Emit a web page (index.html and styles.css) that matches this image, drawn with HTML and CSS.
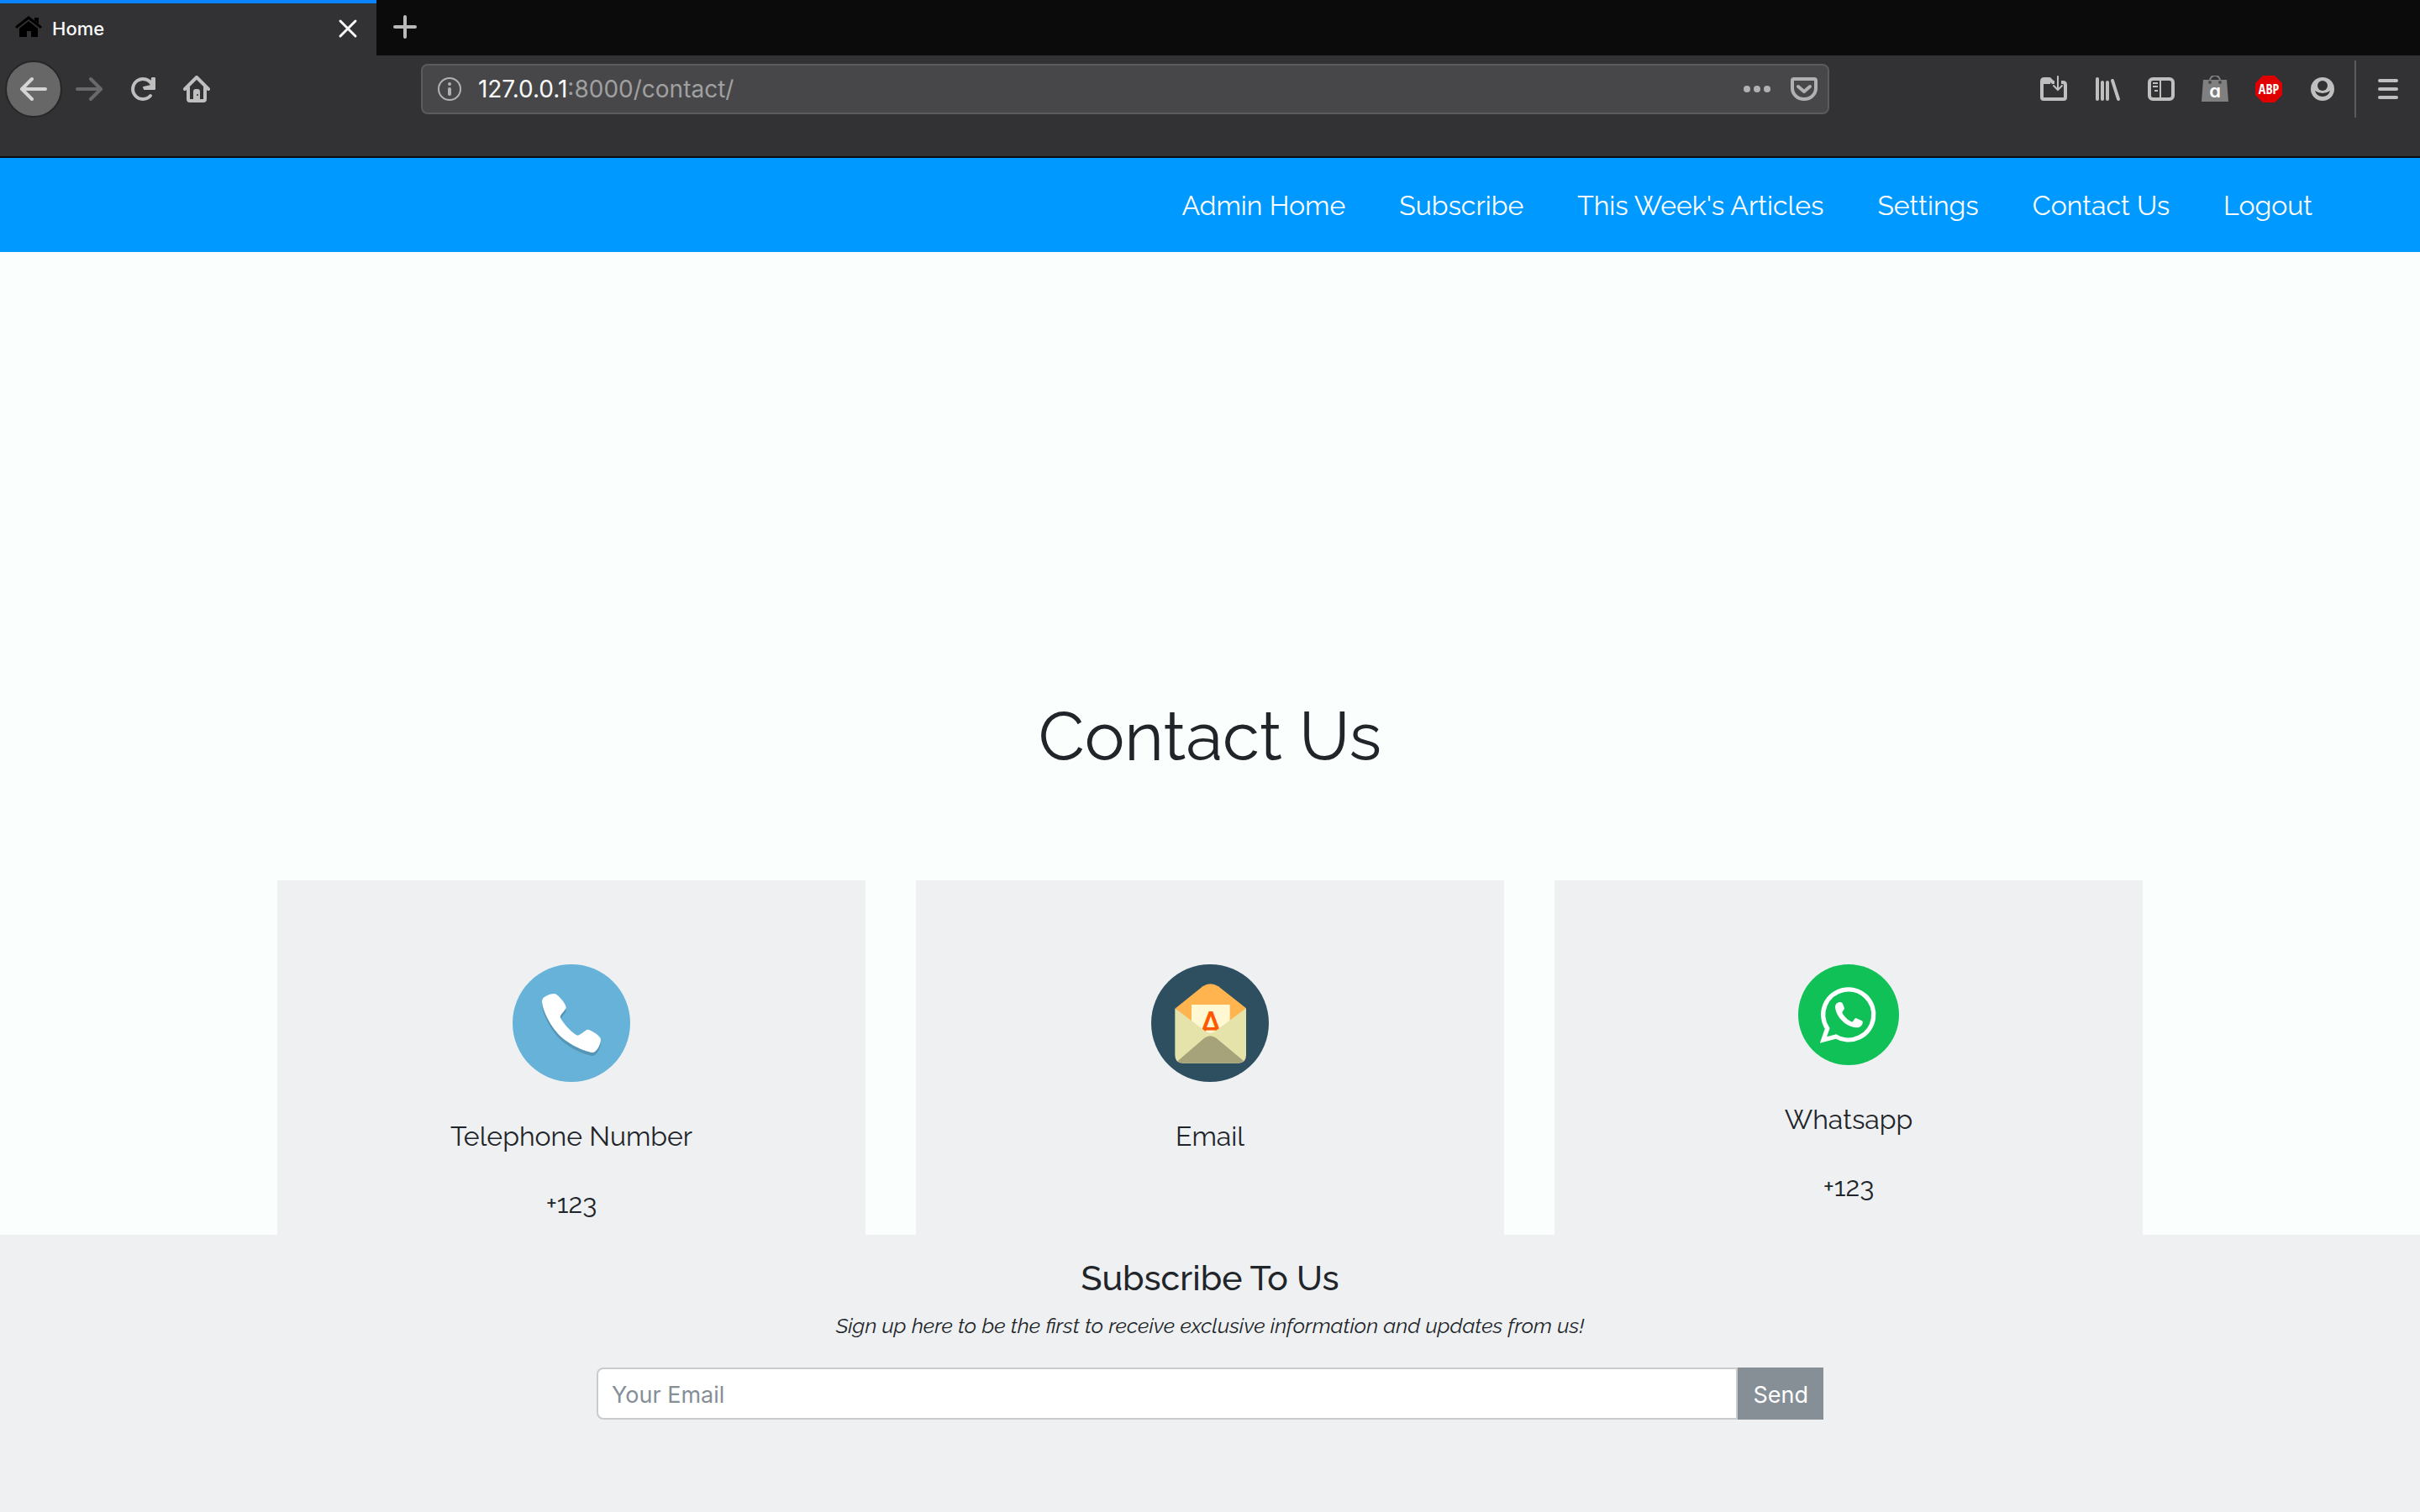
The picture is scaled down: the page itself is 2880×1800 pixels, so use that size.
FILE: index.html
```html
<!DOCTYPE html>
<html lang="en">
<head>
<meta charset="utf-8">
<meta name="viewport" content="width=device-width, initial-scale=1">
<title>Home</title>
<link rel="stylesheet" href="styles.css">
</head>
<body>
<div class="app">
  <header class="browser">
    <div class="tabs">
      <div class="tab">
        <svg class="icon" viewBox="0 0 32 32" aria-hidden="true"><path d="M5 15 16 6l11 9v11h-8v-7h-5v7H5z"/><path d="M23 3h5v9l-5-4z"/><path d="M2 15 16 4l14 11" fill="none" stroke="#323234" stroke-width="5"/><path d="M2 14 16 3l14 11" fill="none" stroke="#000" stroke-width="3" stroke-linecap="round"/></svg>
        <span class="tab-title">Home</span>
        <button class="tab-close" type="button" aria-label="Close tab"><svg class="icon" viewBox="0 0 32 32"><path d="m7 7 18 18M25 7 7 25" fill="none" stroke="#f9f9fa" stroke-width="3" stroke-linecap="round"/></svg></button>
      </div>
      <button class="tab-new" type="button" aria-label="New tab"><svg class="icon" viewBox="0 0 32 32"><path d="M16 4v24M4 16h24" fill="none" stroke="#b9b9ba" stroke-width="4" stroke-linecap="round"/></svg></button>
    </div>
    <div class="toolbar">
      <button class="tool tool-back" type="button" aria-label="Back"><svg class="icon" viewBox="0 0 32 32"><path d="M30 16H3M14 4 2 16l12 12" fill="none" stroke="#d4d4d4" stroke-width="4" stroke-linecap="round" stroke-linejoin="round"/></svg></button>
      <button class="tool" type="button" aria-label="Forward"><svg class="icon" viewBox="0 0 32 32"><path d="M2 16h27M18 4l12 12-12 12" fill="none" stroke="#69696b" stroke-width="4" stroke-linecap="round" stroke-linejoin="round"/></svg></button>
      <button class="tool" type="button" aria-label="Reload"><svg class="icon" viewBox="0 0 32 32"><path d="M25 24a12 12 0 1 1 2-13" fill="none" stroke="#bfbfc0" stroke-width="4" stroke-linecap="round"/><path d="M30 3v13H18l-1-2 9-2 1-9z" fill="#bfbfc0" stroke="#bfbfc0" stroke-width="2" stroke-linejoin="round"/></svg></button>
      <button class="tool" type="button" aria-label="Home page"><svg class="icon" viewBox="0 0 32 32"><path d="M2 16 16 2l14 14M6 14v14q0 2 2 2h16q2 0 2-2V14" fill="none" stroke="#bfbfc0" stroke-width="4" stroke-linecap="round" stroke-linejoin="round"/><path d="M12 30V19q0-3 3-3h2q3 0 3 3v11z" fill="#bfbfc0"/><circle cx="17" cy="23" r="1" fill="#323234"/></svg></button>
      <span class="spring"></span>
      <div class="urlbar">
        <svg class="icon" viewBox="0 0 32 32" aria-hidden="true"><circle cx="16" cy="16" r="13" fill="none" stroke="#b1b1b3" stroke-width="2"/><circle cx="16" cy="10" r="2" fill="#b1b1b3"/><path d="M16 16v6" stroke="#b1b1b3" stroke-width="4" stroke-linecap="round"/></svg>
        <div class="url"><span class="host">127.0.0.1</span>:8000/contact/</div>
        <div class="url-actions">
          <svg class="icon" viewBox="0 0 32 32" aria-hidden="true"><g fill="#b1b1b3"><circle cx="4" cy="16" r="4"/><circle cx="16" cy="16" r="4"/><circle cx="28" cy="16" r="4"/></g></svg>
          <svg class="icon" viewBox="0 0 32 32" aria-hidden="true"><g fill="none" stroke="#b1b1b3" stroke-linecap="round" stroke-linejoin="round"><path d="M4 4h24q2 0 2 2v9a14 13 0 0 1-28 0V6q0-2 2-2z" stroke-width="4"/><path d="m9 13 7 6 7-6" stroke-width="4"/></g></svg>
        </div>
      </div>
      <span class="spring"></span>
      <button class="tool" type="button" aria-label="Save to folder"><svg class="icon" viewBox="0 0 32 32"><path d="M2 8h10M17 8h-2l-4-4H5Q2 4 2 7v19q0 2 2 2h24q2 0 2-2V11q0-3-3-3h-2" fill="none" stroke="#bfbfc0" stroke-width="4" stroke-linejoin="round"/><path d="M21 0v14" fill="none" stroke="#323234" stroke-width="6"/><path d="M21 1v16m-5-5 5 5 5-5" fill="none" stroke="#bfbfc0" stroke-width="2" stroke-linecap="round"/></svg></button>
      <button class="tool" type="button" aria-label="Library"><svg class="icon" viewBox="0 0 32 32"><path d="M4 4v24M10 8v20M16 8v20M22 6l7 22" fill="none" stroke="#bfbfc0" stroke-width="4" stroke-linecap="round"/></svg></button>
      <button class="tool" type="button" aria-label="Sidebar"><svg class="icon" viewBox="0 0 32 32"><rect x="2" y="4" width="28" height="24" rx="4" fill="none" stroke="#bfbfc0" stroke-width="4"/><path d="M15 4v24M6 9h6M6 13h6M8 18h4" stroke="#bfbfc0" stroke-width="2"/></svg></button>
      <button class="tool" type="button" aria-label="Shopping assistant"><svg class="icon" viewBox="0 0 32 32"><path d="M2 5h28l2 26H0z" fill="#808080"/><path d="M10 8V6a6 6 0 0 1 12 0v2" fill="none" stroke="#808080" stroke-width="2"/><circle cx="10" cy="8" r="2" fill="#4a4a4b"/><circle cx="22" cy="8" r="2" fill="#4a4a4b"/><text class="bag-letter" x="16" y="26">a</text></svg></button>
      <button class="tool" type="button" aria-label="Adblock Plus"><svg class="icon" viewBox="0 0 32 32"><path d="M9 0h14l9 9v14l-9 9H9l-9-9V9z" fill="#e00000"/><text class="abp-letters" x="16" y="22">ABP</text></svg></button>
      <button class="tool" type="button" aria-label="Account"><svg class="icon" viewBox="0 0 32 32"><circle cx="16" cy="16" r="14" fill="#bfbfc0"/><circle cx="16" cy="12" r="6" fill="#323234"/><path d="M7 18q4 3 9 3t9-3q-2 7-9 7t-9-7z" fill="#323234"/></svg></button>
      <span class="divider"></span>
      <button class="tool" type="button" aria-label="Menu"><svg class="icon" viewBox="0 0 32 32"><path d="M6 6h20M6 16h20M6 26h20" fill="none" stroke="#bfbfc0" stroke-width="4" stroke-linecap="round"/></svg></button>
    </div>
  </header>

  <nav class="nav">
    <a href="#admin">Admin Home</a>
    <a href="#subscribe">Subscribe</a>
    <a href="#articles">This Week's Articles</a>
    <a href="#settings">Settings</a>
    <a href="#contact">Contact Us</a>
    <a href="#logout">Logout</a>
  </nav>

  <main class="main" id="contact">
    <h1>Contact Us</h1>
    <div class="cards">
      <section class="card">
        <svg class="badge" viewBox="0 0 420 420" aria-hidden="true">
          <defs><path id="handset" d="M105 131Q104 125 112 118Q130 105 150 105C160 105 191 140 191 154C191 162 170 180 170 188C176 205 214 248 233 254C242 252 258 236 267 233C280 233 315 256 315 268C315 285 302 312 288 315C278 317 222 299 180 265C135 225 107 165 105 131Z"/></defs>
          <circle cx="210" cy="210" r="210" fill="#66b2d8"/>
          <use href="#handset" y="12" fill="#5596b6"/>
          <use href="#handset" fill="#fff"/>
        </svg>
        <h2>Telephone Number</h2>
        <p>+123</p>
      </section>
      <section class="card">
        <svg class="badge" viewBox="0 0 420 420" aria-hidden="true">
          <circle cx="210" cy="210" r="210" fill="#2d4f60"/>
          <path d="M87 157 184 79Q211 60 240 79L339 157 270 230H150Z" fill="#ffb450"/>
          <path d="M144 144h137v110H144z" fill="#fff8d2"/>
          <text class="mail-letter" x="213" y="261">A</text>
          <path d="M85 157 192 238Q211 252 230 238L339 157V325Q339 353 311 353H113Q85 353 85 325Z" fill="#e5e3a9"/>
          <path d="M95 345 190 263Q211 248 232 263L330 345Q322 353 311 353H113Q103 353 95 345Z" fill="#a6a37a"/>
        </svg>
        <h2>Email</h2>
      </section>
      <section class="card">
        <svg class="badge badge-small" viewBox="0 0 360 360" aria-hidden="true">
          <circle cx="180" cy="180" r="180" fill="#10c158"/>
          <path d="M104 229A90 90 0 1 1 135 258L90 270Z" fill="none" stroke="#fff" stroke-width="16"/>
          <path d="M132 151C133 142 140 135 149 135Q158 134 160 143L165 157C165 164 155 168 158 175C164 187 179 201 192 206C198 204 200 193 206 192L228 202Q232 205 230 210C228 220 219 227 206 226C168 223 133 185 132 151Z" fill="#fff"/>
        </svg>
        <h2>Whatsapp</h2>
        <p>+123</p>
      </section>
    </div>
  </main>

  <footer class="footer" id="subscribe">
    <h2>Subscribe To Us</h2>
    <p>Sign up here to be the first to receive exclusive information and updates from us!</p>
    <form class="signup">
      <input type="email" name="email" placeholder="Your Email" aria-label="Your Email">
      <button type="submit">Send</button>
    </form>
  </footer>
</div>
</body>
</html>
```
FILE: styles.css
```css
*,
*::before,
*::after {
  box-sizing: border-box;
}

body {
  margin: 0;
  background: #fafffd;
  color: #212529;
  font-family: Raleway, "Open Sans", sans-serif;
}

h1,
h2,
p {
  margin: 0;
}

button {
  border: 0;
  padding: 0;
  background: none;
  font: inherit;
  cursor: pointer;
}

.app {
  display: flex;
  flex-direction: column;
  height: 100vh;
}

/* Browser chrome */
.browser {
  border-bottom: 2px solid #0c0c0d;
  background: #323234;
  font-family: Inter, sans-serif;
}

.icon {
  display: block;
  flex: none;
  width: 32px;
  height: 32px;
}

.tabs {
  display: flex;
  height: 66px;
  background: #0b0b0b;
}

.tab {
  display: flex;
  align-items: center;
  gap: 12px;
  width: 448px;
  padding: 0 18px 2px;
  border-top: 4px solid #0a84ff;
  background: #323234;
}

.tab-title {
  flex: 1;
  color: #f9f9fa;
  font-size: 22px;
  font-weight: 500;
}

.tab-new {
  padding: 0 18px 2px;
}

.toolbar {
  display: flex;
  align-items: center;
  padding: 0 6px 40px;
}

.tool {
  display: flex;
  flex: none;
  align-items: center;
  justify-content: center;
  width: 64px;
  height: 80px;
}

.tool-back {
  width: 68px;
  height: 68px;
  border: 2px solid #262627;
  border-radius: 50%;
  background: #676767;
}

.spring {
  flex: 5;
}

.urlbar {
  display: flex;
  flex: 35;
  align-items: center;
  gap: 18px;
  height: 60px;
  padding: 0 12px 0 16px;
  border: 2px solid #5b5b5c;
  border-radius: 8px;
  background: #474749;
}

.url {
  flex: 1;
  color: #a0a0a1;
  font-size: 28px;
}

.host {
  color: #f9f9fa;
}

.url-actions {
  display: flex;
  gap: 24px;
}

.divider {
  width: 2px;
  height: 68px;
  margin: 0 6px;
  background: #5b5b5d;
}

.bag-letter,
.abp-letters,
.mail-letter {
  text-anchor: middle;
  fill: #fff;
}

.bag-letter {
  font-family: Inter, sans-serif;
  font-feature-settings: "cv11", "ss04";
  font-size: 22px;
  font-weight: 600;
}

.abp-letters {
  font-family: "Liberation Sans Narrow", "Open Sans Condensed", "Roboto Condensed", "Open Sans", sans-serif;
  font-size: 16px;
  font-weight: 700;
}

.mail-letter {
  fill: #ff5800;
  font-family: Raleway, "Open Sans", sans-serif;
  font-size: 127px;
  font-weight: 600;
}

/* Site navigation */
.nav {
  display: flex;
  flex: none;
  align-items: center;
  justify-content: flex-end;
  gap: 64px;
  height: 112px;
  padding: 2px 128px 0;
  background: #0099ff;
}

.nav a {
  color: #fff;
  font-size: 32px;
  line-height: 44px;
  text-decoration: none;
}

/* Contact cards */
.main {
  flex: 1;
  min-height: 0;
  overflow: hidden;
  padding: 529px 32px 0;
}

h1 {
  font-size: 80px;
  font-weight: 400;
  line-height: 96px;
  text-align: center;
}

.cards {
  display: grid;
  grid-template-columns: repeat(3, 1fr);
  gap: 60px;
  max-width: 2220px;
  margin: 123px auto 0;
}

.card {
  display: flex;
  flex-direction: column;
  align-items: center;
  min-height: 480px;
  padding: 100px 32px;
  background: #eef0f2;
}

.badge {
  width: 140px;
  height: 140px;
}

.badge-small {
  width: 120px;
  height: 120px;
}

.card h2,
.card p {
  font-size: 32px;
  font-weight: 400;
  line-height: 48px;
}

.card h2 {
  margin-top: 41px;
}

.card p {
  margin-top: 32px;
}

/* Subscribe */
.footer {
  flex: none;
  min-height: 330px;
  padding: 28px 32px;
  background: #eef0f2;
  text-align: center;
}

.footer h2 {
  font-size: 41px;
  font-weight: 500;
  line-height: 48px;
}

.footer p {
  margin-top: 14px;
  font-size: 25px;
  font-style: italic;
  line-height: 36px;
}

.signup {
  display: flex;
  max-width: 1460px;
  height: 62px;
  margin: 32px auto 0;
  font-family: Inter, sans-serif;
  font-size: 27px;
}

.signup input {
  flex: 1;
  min-width: 0;
  padding: 2px 16px 0;
  border: 2px solid #c9cbcd;
  border-radius: 8px 0 0 8px;
  background: #fff;
  color: #212529;
  font: inherit;
}

.signup input::placeholder {
  color: #868e96;
  opacity: 1;
}

.signup button {
  padding: 2px 18px 0;
  background: #868e96;
  color: #fff;
}
```
